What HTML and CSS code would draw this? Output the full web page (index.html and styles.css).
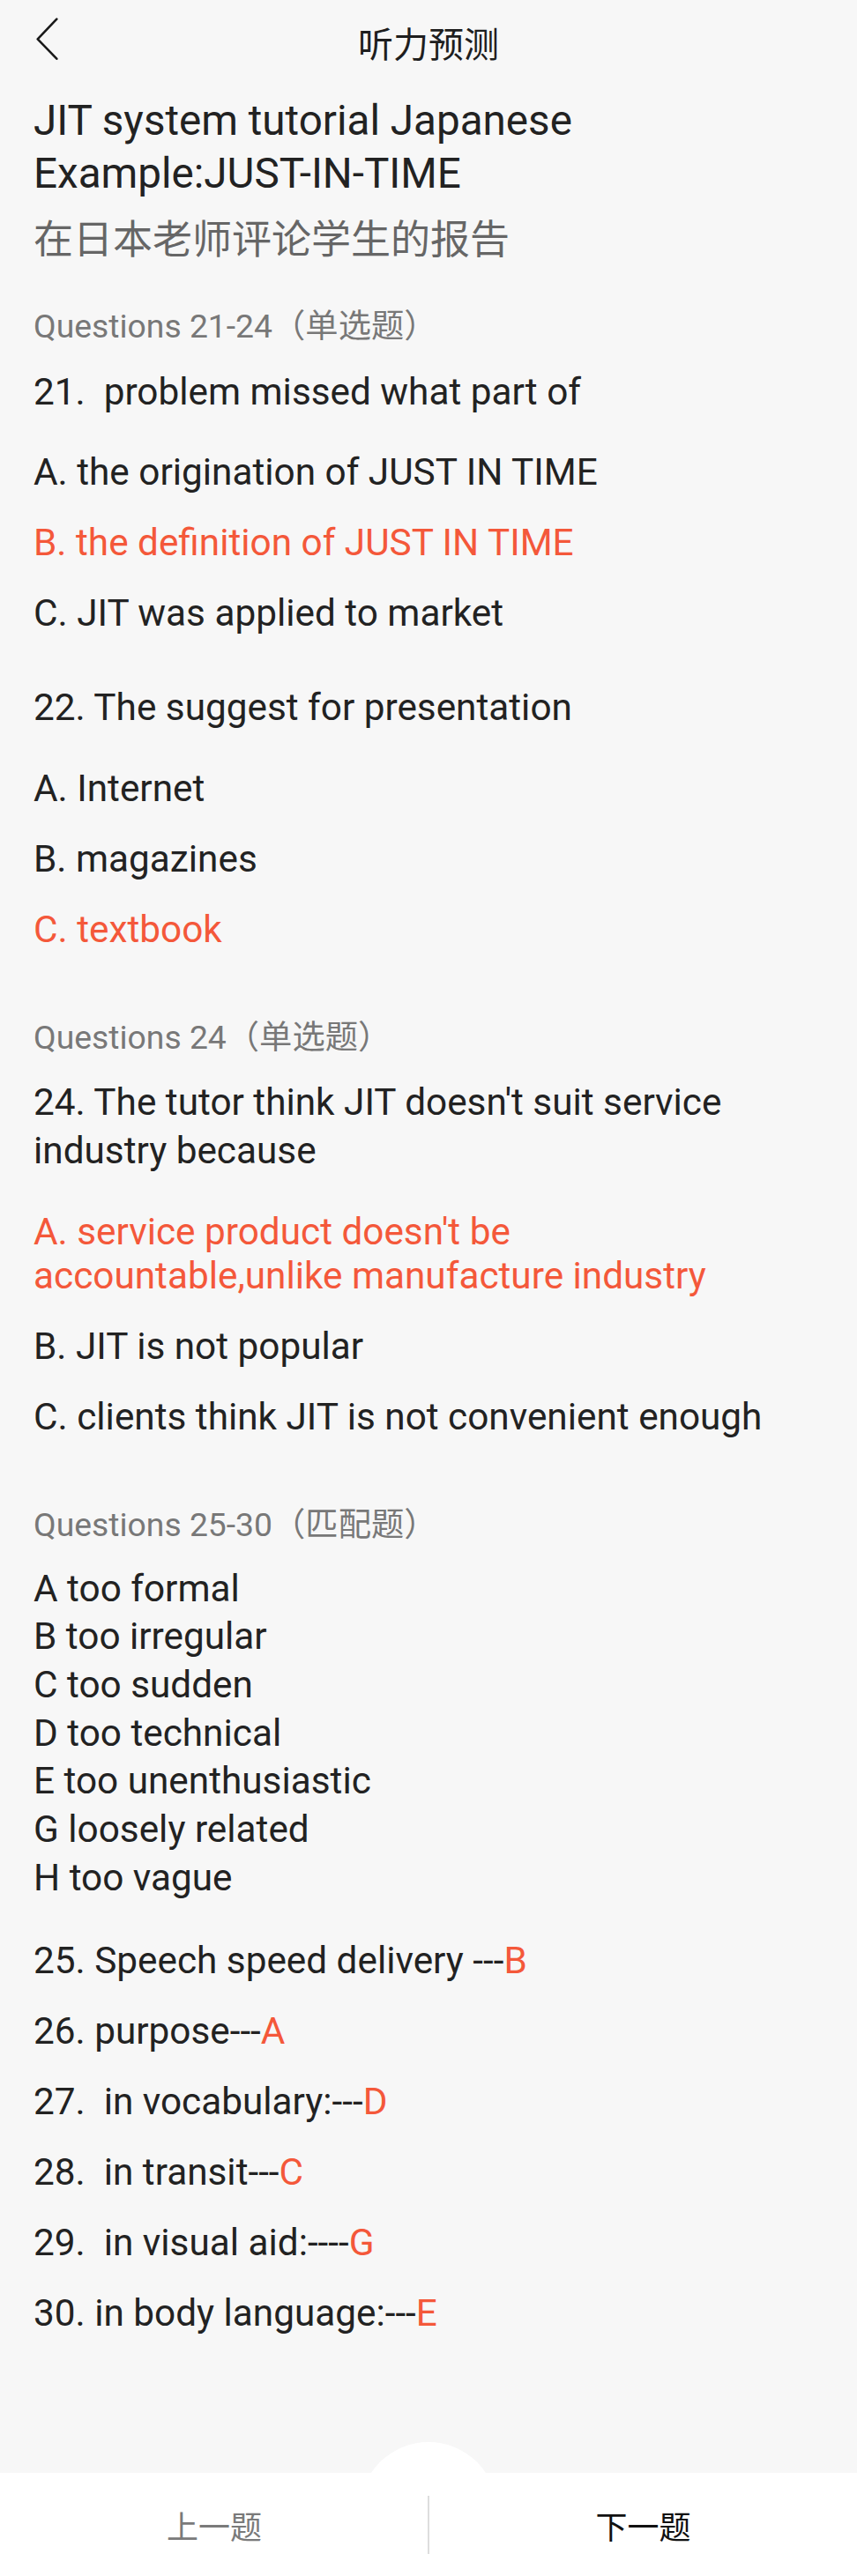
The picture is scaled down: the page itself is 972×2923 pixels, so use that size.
FILE: index.html
```html
<!DOCTYPE html>
<html lang="zh-CN">
<head>
    <meta charset="UTF-8">
    <meta name="viewport" content="width=device-width, initial-scale=1.0">
    <title>听力预测</title>
    <link rel="stylesheet" href="styles.css">
</head>
<body>
    <header class="topbar">
        <a class="back" href="#">
            <svg width="28" height="50" viewBox="0 0 28 50">
                <polyline points="24.3,1.7 2.7,24.3 24.3,46.7" fill="none" stroke="#1a1a1a" stroke-width="2.6" stroke-linecap="round" stroke-linejoin="round"/>
            </svg>
        </a>
        <div class="topbar-title">听力预测</div>
    </header>

    <main class="content">
        <h1 class="title">JIT system tutorial Japanese Example:JUST-IN-TIME</h1>
        <p class="subtitle">在日本老师评论学生的报告</p>

        <div class="section-label">Questions 21-24（单选题）</div>
        <div class="group">
            <p class="question">21.&nbsp; problem missed what part of</p>
            <ul class="options">
                <li class="option">A. the origination of JUST IN TIME</li>
                <li class="option correct">B. the definition of JUST IN TIME</li>
                <li class="option">C. JIT was applied to market</li>
            </ul>
        </div>
        <div class="group">
            <p class="question">22. The suggest for presentation</p>
            <ul class="options">
                <li class="option">A. Internet</li>
                <li class="option">B. magazines</li>
                <li class="option correct">C. textbook</li>
            </ul>
        </div>

        <div class="section-label">Questions 24（单选题）</div>
        <div class="group">
            <p class="question">24. The tutor think JIT doesn't suit service industry because</p>
            <ul class="options">
                <li class="option correct">A. service product doesn't be accountable,unlike manufacture industry</li>
                <li class="option">B. JIT is not popular</li>
                <li class="option">C. clients think JIT is not convenient enough</li>
            </ul>
        </div>

        <div class="section-label">Questions 25-30（匹配题）</div>
        <p class="match-list">
            A too formal<br>
            B too irregular<br>
            C too sudden<br>
            D too technical<br>
            E too unenthusiastic<br>
            G loosely related<br>
            H too vague
        </p>
        <ul class="answers">
            <li class="option">25. Speech speed delivery ---<span class="ans">B</span></li>
            <li class="option">26. purpose---<span class="ans">A</span></li>
            <li class="option">27.&nbsp; in vocabulary:---<span class="ans">D</span></li>
            <li class="option">28.&nbsp; in transit---<span class="ans">C</span></li>
            <li class="option">29.&nbsp; in visual aid:----<span class="ans">G</span></li>
            <li class="option">30. in body language:---<span class="ans">E</span></li>
        </ul>
    </main>

    <footer class="bottom-nav">
        <a class="nav-btn prev" href="#">上一题</a>
        <a class="nav-btn next" href="#">下一题</a>
    </footer>
</body>
</html>
```

FILE: styles.css
```css
/* Page de base */
body {
    margin: 0;
    background: #f7f7f7;
    color: #222222;
    font-family: Roboto, "Noto Sans CJK SC", sans-serif;
    min-height: 100vh;
    display: flex;
    flex-direction: column;
}

a {
    text-decoration: none;
    color: inherit;
}

/* Barre du haut */
.topbar {
    height: 96px;
    display: grid;
    grid-template-columns: 110px 1fr 110px;
    align-items: center;
}

.back {
    align-self: start;
    margin-top: 20px;
    padding-left: 40px;
    display: block;
    height: 50px;
}

.topbar-title {
    font-family: "Noto Sans CJK SC", sans-serif;
    font-size: 40px;
    line-height: 40px;
    text-align: center;
    color: #1e1e1e;
}

/* Contenu */
.content {
    flex: 1;
    padding: 0 60px 0 38px;
}

.title {
    font-size: 47.6px;
    line-height: 60px;
    font-weight: 400;
    margin: 11px 0 0;
    color: #222222;
}

.subtitle {
    font-family: "Noto Sans CJK SC", sans-serif;
    font-size: 45px;
    line-height: 60px;
    color: #666666;
    margin: 12px 0 0;
}

.section-label {
    font-size: 37.3px;
    line-height: 50px;
    color: #787878;
    margin-top: 72px;
}

.subtitle + .section-label {
    margin-top: 46px;
}

.question {
    font-size: 42.3px;
    line-height: 55px;
    margin: 21.5px 0 0;
}

.group + .group .question {
    margin-top: 54px;
}

.options,
.answers {
    list-style: none;
    margin: 39.5px 0 0;
    padding: 0;
}

.option {
    font-size: 42.3px;
    line-height: 50px;
}

.option + .option {
    margin-top: 30px;
}

.correct,
.ans {
    color: #f4583a;
}

.match-list {
    font-size: 42.3px;
    line-height: 54.7px;
    margin: 21px 0 0;
}

.answers {
    margin-top: 41.5px;
}

/* Barre du bas */
.bottom-nav {
    position: relative;
    height: 117px;
    background: #ffffff;
    display: grid;
    grid-template-columns: 1fr 1fr;
    align-items: center;
}

/* petite bosse blanche au milieu */
.bottom-nav::before {
    content: '';
    position: absolute;
    left: 50%;
    top: -35px;
    width: 156px;
    height: 156px;
    border-radius: 50%;
    background: #ffffff;
    transform: translateX(-50%);
    z-index: -1;
}

.nav-btn {
    font-family: "Noto Sans CJK SC", sans-serif;
    font-size: 36px;
    height: 66px;
    line-height: 66px;
    text-align: center;
}

.prev {
    color: #7a7a7a;
}

.next {
    color: #111111;
    border-left: 2px solid #dddddd;
    margin-left: -1px;
}
```
